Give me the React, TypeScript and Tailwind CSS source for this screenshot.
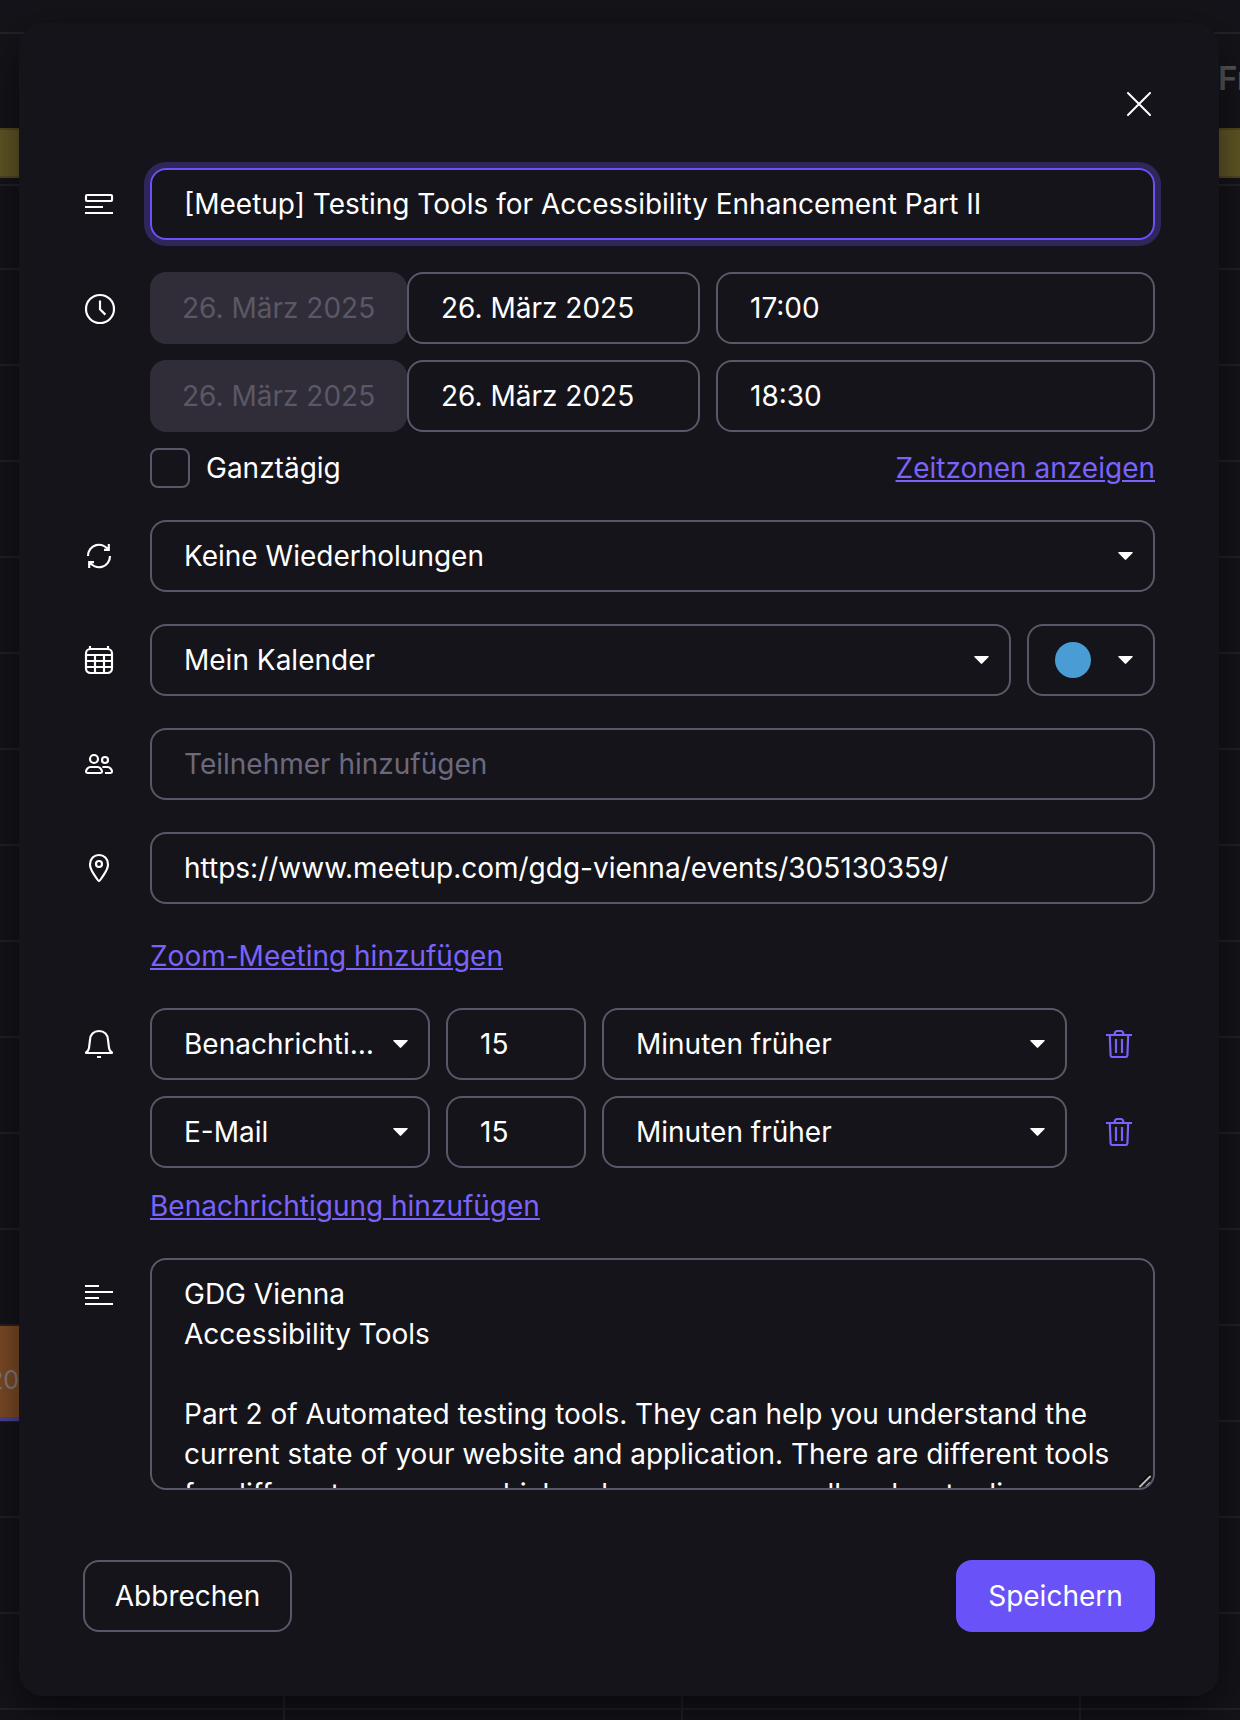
import React from "react";

type P = { children?: React.ReactNode; className?: string };

const field = "h-[72px] rounded-2xl border-2 border-[#5b576b] flex items-center";

function Icon({ children, className = "" }: P) {
  return (
    <svg viewBox="0 0 16 16" fill="none" stroke="currentColor" strokeWidth="1.08" className={"size-8 shrink-0 " + className}>
      {children}
    </svg>
  );
}

function Caret() {
  return (
    <svg viewBox="0 0 15 8" className="w-[15px] h-2 shrink-0 fill-white">
      <path d="M0.9 0h13.2c.7 0 .9.7.5 1.1L8.2 7.6a1 1 0 0 1-1.4 0L.4 1.1C0 .7.2 0 .9 0z" />
    </svg>
  );
}

function Select({ children, className = "" }: P) {
  return (
    <div className={field + " justify-between pl-8 pr-[20.5px] " + className}>
      <span>{children}</span>
      <Caret />
    </div>
  );
}

function Row({ icon, children, className = "" }: P & { icon: React.ReactNode }) {
  return (
    <div className={"flex gap-[35px] " + className}>
      <div className="h-[72px] w-8 flex items-center shrink-0">{icon}</div>
      <div className="flex-1 min-w-0">{children}</div>
    </div>
  );
}

function DateLine({ time }: { time: string }) {
  return (
    <div className="flex">
      <div className="h-[72px] w-[257px] rounded-2xl bg-[#302d39] text-[#5b5866] flex items-center pl-8">26. März 2025</div>
      <div className={field + " w-[293px] pl-8"}>26. März 2025</div>
      <div className={field + " flex-1 ml-4 pl-8"}>{time}</div>
    </div>
  );
}

function Reminder({ kind }: { kind: string }) {
  return (
    <div className="flex items-center gap-4">
      <Select className="w-[280px]">{kind}</Select>
      <div className={field + " w-[140px] pl-8"}>15</div>
      <Select className="w-[465px]">Minuten früher</Select>
      <Icon className="ml-5 text-[#7862fb]">
        <path d="M1.5 3.5h13M5.6 3.4l.5-1.3c.15-.4.4-.6.8-.6h2.2c.4 0 .65.2.8.6l.5 1.3M3.4 3.6l.4 10.2c0 .4.3.7.7.7h7c.4 0 .7-.3.7-.7l.4-10.2M6.5 5.5v7M9.5 5.5v7" />
      </Icon>
    </div>
  );
}

const link = "underline text-[#7a63fb] decoration-2 underline-offset-[2px]";

function Backdrop() {
  return (
    <div className="absolute inset-0 flex flex-col bg-[#15141a] overflow-hidden">
      <div className="h-[34px] shrink-0 border-b-2 border-[#24222a]" />
      <div className="h-[94px] shrink-0 flex justify-end pt-6">
        <span className="w-[22px] text-[33px] leading-[40px] font-semibold text-[#57565b] whitespace-nowrap">Fr</span>
      </div>
      <div className="h-[50px] shrink-0 bg-[#645a27] border-y-2 border-[#554a20]" />
      <div className="h-[8px] shrink-0 border-b-2 border-[#24222a]" />
      <div className="flex-1 flex flex-col">
        {Array.from({ length: 16 }, (_, i) => (
          <div key={i} className={(i === 0 ? "h-[84px]" : "h-24") + " shrink-0 border-b-2 border-[#24222a]"} />
        ))}
      </div>
      <div className="absolute left-0 top-[1326px] h-[95px] w-[60px] bg-[#824e27] border-b-4 border-[#4f4499] text-[#8a8480] text-[25px] leading-[108px]">
        <span className="-ml-[12px]">20</span>
      </div>
      <div className="absolute left-0 bottom-0 h-[32px] w-full flex">
        <div className="w-[285px] border-r-2 border-[#24222a]" />
        <div className="w-[398px] border-r-2 border-[#24222a]" />
        <div className="w-[398px] border-r-2 border-[#24222a]" />
      </div>
    </div>
  );
}

export default function App() {
  return (
    <div className="relative w-[1240px] h-[1720px] overflow-hidden pt-[23px] pl-[19px] font-['Inter',sans-serif] text-[28px] leading-[40px] text-white">
      <Backdrop />
      <div className="relative w-[1200px] h-[1673px] rounded-[24px] bg-[#15141a] shadow-[0_16px_48px_rgba(0,0,0,0.6)] px-16 flex flex-col">
        <div className="h-[145px] shrink-0 flex justify-end items-start pt-[69px] pr-1">
          <svg viewBox="0 0 24 24" className="size-6" stroke="white" strokeWidth="2" strokeLinecap="round">
            <path d="M1 1l22 22M23 1L1 23" />
          </svg>
        </div>

        <Row icon={<Icon><rect x="1.5" y="3.5" width="13" height="3" rx="0.5" /><path d="M1 9.5h9M1 12.5h14" /></Icon>}>
          <div className="h-[72px] rounded-2xl border-2 border-[#6953f8] ring-6 ring-[#2f275c] flex items-center pl-8">
            [Meetup] Testing Tools for Accessibility Enhancement Part II
          </div>
        </Row>

        <Row className="mt-8" icon={<Icon className="overflow-visible"><circle cx="8.5" cy="8.5" r="7" /><path d="M8.5 4.2v4.5l2.7 2.6" /></Icon>}>
          <div className="flex flex-col gap-4">
            <DateLine time="17:00" />
            <DateLine time="18:30" />
            <div className="flex items-center h-10">
              <div className="size-10 rounded-lg border-2 border-[#5b576b]" />
              <span className="ml-4 flex-1">Ganztägig</span>
              <a className={link}>Zeitzonen anzeigen</a>
            </div>
          </div>
        </Row>

        <Row className="mt-8" icon={<Icon><path d="M2.5 8a5.5 5.5 0 0 1 10.3-2.8M13.5 8a5.5 5.5 0 0 1-10.3 2.8M12.9 2v2.9h-2.4M3.1 14v-2.9h2.4" /></Icon>}>
          <Select>Keine Wiederholungen</Select>
        </Row>

        <Row className="mt-8" icon={<Icon><rect x="1.5" y="2.5" width="13" height="12" rx="2.2" /><path d="M3.5 1v1.5M12.5 1v1.5M1.5 5.5h13M1.5 8.5h13M1.5 11.5h13M6 5.5v9M10.5 5.5v9" /></Icon>}>
          <div className="flex gap-4">
            <Select className="flex-1">Mein Kalender</Select>
            <div className={field + " w-32 justify-between pl-[26px] pr-[20.5px]"}>
              <div className="size-9 rounded-full bg-[#4a9cd5]" />
              <Caret />
            </div>
          </div>
        </Row>

        <Row className="mt-8" icon={<Icon><circle cx="5.5" cy="5.5" r="2" /><circle cx="11" cy="6" r="1.5" /><path d="M3.6 9.5h3.8c.9 0 2.1 1.3 2.1 2.3 0 .5-.3.7-.7.7H2.2c-.4 0-.7-.2-.7-.7 0-1 1.2-2.3 2.1-2.3zM9.7 9.5h2.6c1 0 2.2 1.3 2.2 2.3 0 .5-.3.7-.7.7H11" /></Icon>}>
          <div className={field + " pl-8 text-[#6d697d]"}>Teilnehmer hinzufügen</div>
        </Row>

        <Row className="mt-8" icon={<Icon><path d="M8 14.5c-.3 0-4.5-5.3-4.5-8.3C3.5 3.4 5.5 1.5 8 1.5s4.5 1.9 4.5 4.7c0 3-4.2 8.3-4.5 8.3z" /><circle cx="8" cy="6" r="1.5" /></Icon>}>
          <div className={field + " pl-8"}>https://www.meetup.com/gdg-vienna/events/305130359/</div>
          <div className="mt-8 h-10"><a className={link}>Zoom-Meeting hinzufügen</a></div>
        </Row>

        <Row className="mt-8" icon={<Icon><path d="M1.2 12.5h13.6c-1.3-.7-1.8-1.8-1.9-3.3L12.5 6C12.5 3.3 10.7 1.5 8 1.5S3.5 3.3 3.5 6l-.4 3.2c-.1 1.5-.6 2.6-1.9 3.3zM7 14.5h2" /></Icon>}>
          <div className="flex flex-col gap-4">
            <Reminder kind="Benachrichti…" />
            <Reminder kind="E-Mail" />
          </div>
          <div className="mt-[18px] h-10"><a className={link}>Benachrichtigung hinzufügen</a></div>
        </Row>

        <Row className="mt-8" icon={<Icon><path d="M1 4h7M1 7h14M1 10h7M1 13h14" /></Icon>}>
          <div className="relative h-[232px] rounded-2xl border-2 border-[#5b576b] overflow-hidden pt-[14px] pl-8 whitespace-pre">
            {`GDG Vienna
Accessibility Tools

Part 2 of Automated testing tools. They can help you understand the
current state of your website and application. There are different tools
for different purposes which, rely on your own, all and so to discover`}
            <svg viewBox="0 0 14 14" className="absolute right-0 bottom-0 size-[14px]" strokeLinecap="round">
              <path d="M0.5 11L10.5 1" stroke="black" strokeWidth="2" />
              <path d="M1 12.5L11 2.5M7.5 12.5L11 9" stroke="#b9b9bb" strokeWidth="2" />
            </svg>
          </div>
        </Row>

        <div className="mt-[70px] flex justify-between">
          <button className={field + " w-[209px] justify-center"}>Abbrechen</button>
          <button className="h-[72px] w-[199px] rounded-2xl bg-[#6953f8]">Speichern</button>
        </div>
      </div>
    </div>
  );
}
